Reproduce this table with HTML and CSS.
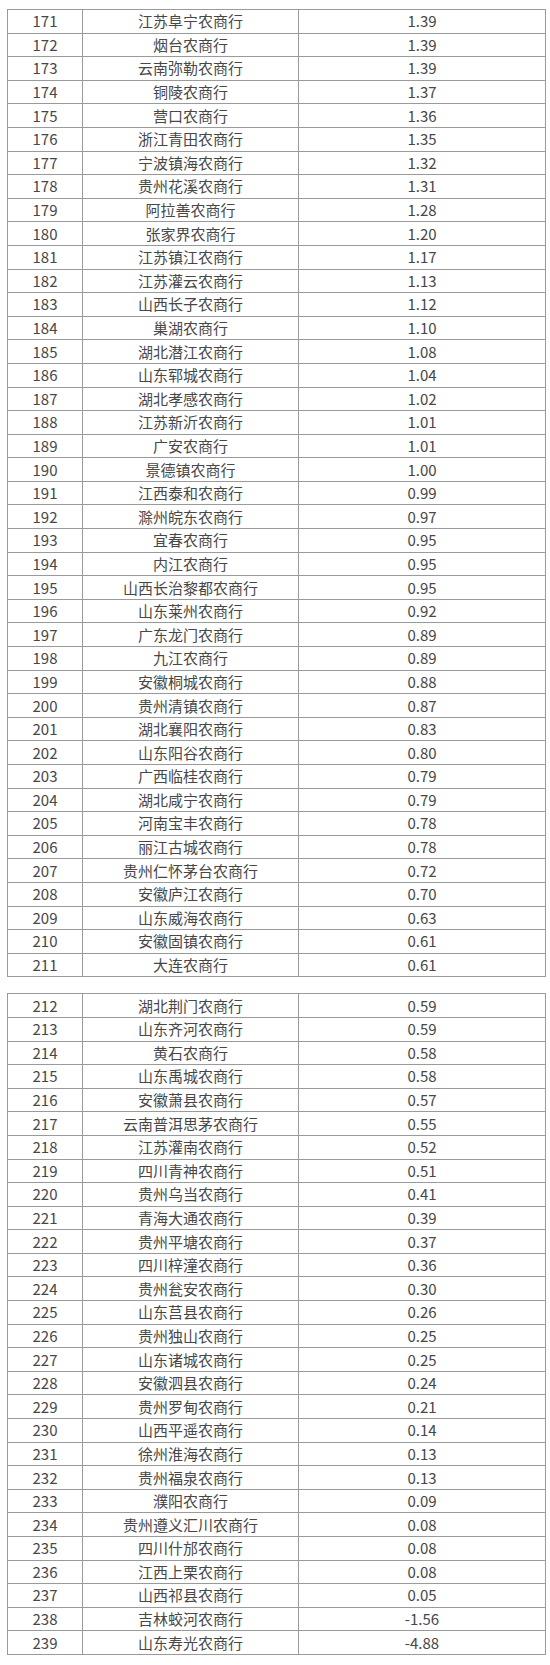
FILE: index.html
```html
<!DOCTYPE html>
<html lang="zh-CN">
<head>
<meta charset="utf-8">
<title>农商行排名</title>
<link rel="stylesheet" href="styles.css">
</head>
<body>
<div class="page">
<table class="rank">
<colgroup><col class="c-no"><col class="c-name"><col class="c-val"></colgroup>
<tbody>
<tr><td>171</td><td>江苏阜宁农商行</td><td>1.39</td></tr>
<tr><td>172</td><td>烟台农商行</td><td>1.39</td></tr>
<tr><td>173</td><td>云南弥勒农商行</td><td>1.39</td></tr>
<tr><td>174</td><td>铜陵农商行</td><td>1.37</td></tr>
<tr><td>175</td><td>营口农商行</td><td>1.36</td></tr>
<tr><td>176</td><td>浙江青田农商行</td><td>1.35</td></tr>
<tr><td>177</td><td>宁波镇海农商行</td><td>1.32</td></tr>
<tr><td>178</td><td>贵州花溪农商行</td><td>1.31</td></tr>
<tr><td>179</td><td>阿拉善农商行</td><td>1.28</td></tr>
<tr><td>180</td><td>张家界农商行</td><td>1.20</td></tr>
<tr><td>181</td><td>江苏镇江农商行</td><td>1.17</td></tr>
<tr><td>182</td><td>江苏灌云农商行</td><td>1.13</td></tr>
<tr><td>183</td><td>山西长子农商行</td><td>1.12</td></tr>
<tr><td>184</td><td>巢湖农商行</td><td>1.10</td></tr>
<tr><td>185</td><td>湖北潜江农商行</td><td>1.08</td></tr>
<tr><td>186</td><td>山东郓城农商行</td><td>1.04</td></tr>
<tr><td>187</td><td>湖北孝感农商行</td><td>1.02</td></tr>
<tr><td>188</td><td>江苏新沂农商行</td><td>1.01</td></tr>
<tr><td>189</td><td>广安农商行</td><td>1.01</td></tr>
<tr><td>190</td><td>景德镇农商行</td><td>1.00</td></tr>
<tr><td>191</td><td>江西泰和农商行</td><td>0.99</td></tr>
<tr><td>192</td><td>滁州皖东农商行</td><td>0.97</td></tr>
<tr><td>193</td><td>宜春农商行</td><td>0.95</td></tr>
<tr><td>194</td><td>内江农商行</td><td>0.95</td></tr>
<tr><td>195</td><td>山西长治黎都农商行</td><td>0.95</td></tr>
<tr><td>196</td><td>山东莱州农商行</td><td>0.92</td></tr>
<tr><td>197</td><td>广东龙门农商行</td><td>0.89</td></tr>
<tr><td>198</td><td>九江农商行</td><td>0.89</td></tr>
<tr><td>199</td><td>安徽桐城农商行</td><td>0.88</td></tr>
<tr><td>200</td><td>贵州清镇农商行</td><td>0.87</td></tr>
<tr><td>201</td><td>湖北襄阳农商行</td><td>0.83</td></tr>
<tr><td>202</td><td>山东阳谷农商行</td><td>0.80</td></tr>
<tr><td>203</td><td>广西临桂农商行</td><td>0.79</td></tr>
<tr><td>204</td><td>湖北咸宁农商行</td><td>0.79</td></tr>
<tr><td>205</td><td>河南宝丰农商行</td><td>0.78</td></tr>
<tr><td>206</td><td>丽江古城农商行</td><td>0.78</td></tr>
<tr><td>207</td><td>贵州仁怀茅台农商行</td><td>0.72</td></tr>
<tr><td>208</td><td>安徽庐江农商行</td><td>0.70</td></tr>
<tr><td>209</td><td>山东威海农商行</td><td>0.63</td></tr>
<tr><td>210</td><td>安徽固镇农商行</td><td>0.61</td></tr>
<tr><td>211</td><td>大连农商行</td><td>0.61</td></tr>
</tbody>
</table>
<table class="rank second">
<colgroup><col class="c-no"><col class="c-name"><col class="c-val"></colgroup>
<tbody>
<tr><td>212</td><td>湖北荆门农商行</td><td>0.59</td></tr>
<tr><td>213</td><td>山东齐河农商行</td><td>0.59</td></tr>
<tr><td>214</td><td>黄石农商行</td><td>0.58</td></tr>
<tr><td>215</td><td>山东禹城农商行</td><td>0.58</td></tr>
<tr><td>216</td><td>安徽萧县农商行</td><td>0.57</td></tr>
<tr><td>217</td><td>云南普洱思茅农商行</td><td>0.55</td></tr>
<tr><td>218</td><td>江苏灌南农商行</td><td>0.52</td></tr>
<tr><td>219</td><td>四川青神农商行</td><td>0.51</td></tr>
<tr><td>220</td><td>贵州乌当农商行</td><td>0.41</td></tr>
<tr><td>221</td><td>青海大通农商行</td><td>0.39</td></tr>
<tr><td>222</td><td>贵州平塘农商行</td><td>0.37</td></tr>
<tr><td>223</td><td>四川梓潼农商行</td><td>0.36</td></tr>
<tr><td>224</td><td>贵州瓮安农商行</td><td>0.30</td></tr>
<tr><td>225</td><td>山东莒县农商行</td><td>0.26</td></tr>
<tr><td>226</td><td>贵州独山农商行</td><td>0.25</td></tr>
<tr><td>227</td><td>山东诸城农商行</td><td>0.25</td></tr>
<tr><td>228</td><td>安徽泗县农商行</td><td>0.24</td></tr>
<tr><td>229</td><td>贵州罗甸农商行</td><td>0.21</td></tr>
<tr><td>230</td><td>山西平遥农商行</td><td>0.14</td></tr>
<tr><td>231</td><td>徐州淮海农商行</td><td>0.13</td></tr>
<tr><td>232</td><td>贵州福泉农商行</td><td>0.13</td></tr>
<tr><td>233</td><td>濮阳农商行</td><td>0.09</td></tr>
<tr><td>234</td><td>贵州遵义汇川农商行</td><td>0.08</td></tr>
<tr><td>235</td><td>四川什邡农商行</td><td>0.08</td></tr>
<tr><td>236</td><td>江西上栗农商行</td><td>0.08</td></tr>
<tr><td>237</td><td>山西祁县农商行</td><td>0.05</td></tr>
<tr><td>238</td><td>吉林蛟河农商行</td><td>-1.56</td></tr>
<tr><td>239</td><td>山东寿光农商行</td><td>-4.88</td></tr>
</tbody>
</table>
</div>
</body>
</html>
```

FILE: styles.css
```css
html, body {
  margin: 0;
  padding: 0;
  background: #ffffff;
}

body {
  font-family: "Noto Sans CJK SC", "Noto Sans", sans-serif;
  color: #474747;
}

.page {
  padding: 9px 0 0 7px;
}

.rank {
  border-collapse: collapse;
  table-layout: fixed;
  width: 538px;
}

.rank.second {
  margin-top: 16px;
}

.c-no { width: 75px; }
.c-name { width: 216px; }
.c-val { width: 247px; }

.rank tr {
  height: 23.6px;
}

.rank td {
  border: 1px solid #9a9a9a;
  padding: 0;
  text-align: center;
  vertical-align: middle;
  font-size: 15px;
  line-height: 20px;
  white-space: nowrap;
}
```
